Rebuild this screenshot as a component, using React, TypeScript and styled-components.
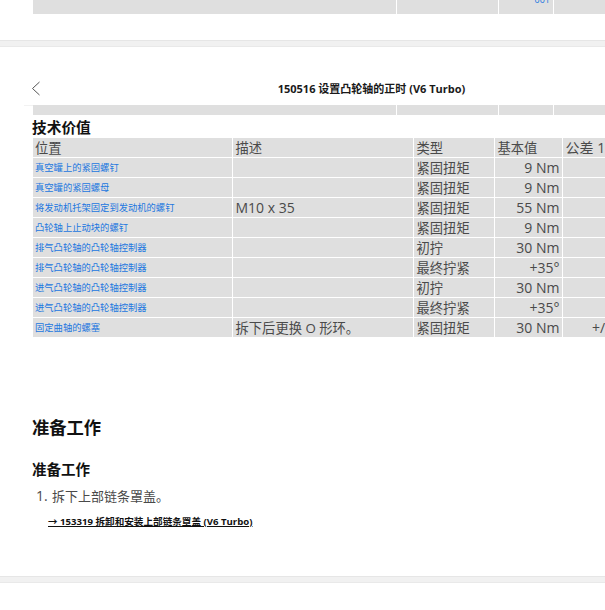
import React from "react";
import styled, { createGlobalStyle } from "styled-components";

const GlobalStyle = createGlobalStyle`
  html, body {
    margin: 0;
    padding: 0;
    background: #fff;
    overflow: hidden;
  }
  body {
    font-family: "Open Sans", "Noto Sans CJK SC", sans-serif;
  }
`;

const Page = styled.div`
  width: 605px;
  height: 610px;
  overflow: hidden;
  display: flex;
  flex-direction: column;
`;

const StubRow = styled.div<{ $height: number }>`
  display: grid;
  grid-template-columns: 363px 101px 54px 60px;
  column-gap: 1px;
  margin-left: 33px;
  width: 600px;
  height: ${(p) => p.$height}px;
  flex-shrink: 0;
`;

const StubCell = styled.div`
  background: #dfdfdf;
  text-align: right;
  padding-right: 3px;
  overflow: hidden;
`;

const StubLink = styled.a`
  display: block;
  margin-top: -7px;
  font-size: 9px;
  line-height: 13px;
  color: #2277e0;
`;

const Divider = styled.div<{ $top: number }>`
  height: 5px;
  margin-top: ${(p) => p.$top}px;
  background: #f1f1f1;
  border-top: 1px solid #e6e6e6;
  border-bottom: 1px solid #e9e9e9;
  flex-shrink: 0;
`;

const TitleBar = styled.div`
  display: flex;
  align-items: center;
  justify-content: center;
  height: 33px;
  margin-top: 25px;
  padding-left: 138px;
  position: relative;
  flex-shrink: 0;
  font-size: 11px;
  line-height: 16px;
  font-weight: 700;
  color: #1a1a1a;

  &::after {
    content: "";
    position: absolute;
    left: 24px;
    bottom: -1px;
    width: 9px;
    height: 1px;
    background: #f2f2f2;
  }
`;

const BackIcon = styled.svg`
  position: absolute;
  left: 31px;
  top: 9px;
  width: 10px;
  height: 15px;
`;

const Section = styled.section`
  padding-left: 32px;
`;

const TableTitle = styled.h3`
  margin: 2px 0 0;
  height: 21px;
  font-size: 14.7px;
  line-height: 21px;
  font-weight: 700;
  color: #111;
`;

const ValueTable = styled.table`
  border-collapse: collapse;
  table-layout: fixed;
  width: 618px;
  margin-left: 1px;
`;

const Cell = styled.td<{ $right?: boolean; $size?: number }>`
  height: 19px;
  padding: 0 2px 0 3px;
  background: #dfdfdf;
  border-right: 1px solid #fff;
  border-bottom: 1px solid #fff;
  font-size: ${(p) => p.$size ?? 14}px;
  line-height: 16px;
  color: #4a4a4a;
  white-space: nowrap;
  overflow: hidden;
  text-align: ${(p) => (p.$right ? "right" : "left")};

  &:first-child {
    padding-left: 2px;
  }
`;

const RowLink = styled.a`
  display: block;
  font-size: 9.3px;
  line-height: 16px;
  color: #2277e0;
`;

const MainHeading = styled.h2`
  margin: 78px 0 0;
  font-size: 17.3px;
  line-height: 24px;
  font-weight: 700;
  color: #111;
`;

const SubHeading = styled.h3`
  margin: 20px 0 0;
  font-size: 14.5px;
  line-height: 20px;
  font-weight: 700;
  color: #111;
`;

const Steps = styled.ol`
  margin: 6px 0 0;
  padding: 0 0 0 4px;
  list-style: none;
  counter-reset: step;
  font-size: 13px;
  line-height: 20px;
  color: #4a4a4a;

  li {
    counter-increment: step;
  }

  li::before {
    content: counter(step) ".";
    display: inline-block;
    width: 16px;
    font-size: 14px;
  }
`;

const RefLink = styled.a`
  display: block;
  margin: 9px 0 0 16px;
  height: 14px;
  font-size: 9.6px;
  line-height: 14px;
  font-weight: 700;
  color: #111;
  text-decoration: underline;
`;

const rows = [
  { pos: "真空罐上的紧固螺钉", desc: "", type: "紧固扭矩", val: "9 Nm", tol: "" },
  { pos: "真空罐的紧固螺母", desc: "", type: "紧固扭矩", val: "9 Nm", tol: "" },
  { pos: "将发动机托架固定到发动机的螺钉", desc: "M10 x 35", type: "紧固扭矩", val: "55 Nm", tol: "" },
  { pos: "凸轮轴上止动块的螺钉", desc: "", type: "紧固扭矩", val: "9 Nm", tol: "" },
  { pos: "排气凸轮轴的凸轮轴控制器", desc: "", type: "初拧", val: "30 Nm", tol: "" },
  { pos: "排气凸轮轴的凸轮轴控制器", desc: "", type: "最终拧紧", val: "+35°", tol: "" },
  { pos: "进气凸轮轴的凸轮轴控制器", desc: "", type: "初拧", val: "30 Nm", tol: "" },
  { pos: "进气凸轮轴的凸轮轴控制器", desc: "", type: "最终拧紧", val: "+35°", tol: "" },
  { pos: "固定曲轴的螺塞", desc: "拆下后更换 O 形环。", type: "紧固扭矩", val: "30 Nm", tol: "+/- 3 Nm" },
];

export default function App() {
  return (
    <Page>
      <GlobalStyle />
      <StubRow $height={14}>
        <StubCell />
        <StubCell />
        <StubCell>
          <StubLink>001</StubLink>
        </StubCell>
        <StubCell />
      </StubRow>
      <Divider $top={26} />
      <TitleBar>
        <BackIcon viewBox="0 0 10 15">
          <path d="M8.5 1 L1.5 7.5 L8.5 14" fill="none" stroke="#555" strokeWidth="1" />
        </BackIcon>
        150516 设置凸轮轴的正时 (V6 Turbo)
      </TitleBar>
      <StubRow $height={10}>
        <StubCell />
        <StubCell />
        <StubCell />
        <StubCell />
      </StubRow>
      <Section>
        <TableTitle>技术价值</TableTitle>
        <ValueTable>
          <colgroup>
            <col width={199} />
            <col width={181} />
            <col width={81} />
            <col width={68} />
            <col width={89} />
          </colgroup>
          <tbody>
            <tr>
              <Cell $size={13.3}>位置</Cell>
              <Cell $size={13.3}>描述</Cell>
              <Cell $size={13.3}>类型</Cell>
              <Cell $size={13.3}>基本值</Cell>
              <Cell>公差 1</Cell>
            </tr>
            {rows.map((row, i) => (
              <tr key={i}>
                <Cell>
                  <RowLink>{row.pos}</RowLink>
                </Cell>
                <Cell $size={row.desc.startsWith("M") ? 14 : 13.3}>{row.desc}</Cell>
                <Cell $size={13.3}>{row.type}</Cell>
                <Cell $right>{row.val}</Cell>
                <Cell $right>{row.tol}</Cell>
              </tr>
            ))}
          </tbody>
        </ValueTable>
        <MainHeading>准备工作</MainHeading>
        <SubHeading>准备工作</SubHeading>
        <Steps>
          <li>拆下上部链条罩盖。</li>
        </Steps>
        <RefLink>→ 153319 拆卸和安装上部链条罩盖 (V6 Turbo)</RefLink>
      </Section>
      <Divider $top={47} />
    </Page>
  );
}
